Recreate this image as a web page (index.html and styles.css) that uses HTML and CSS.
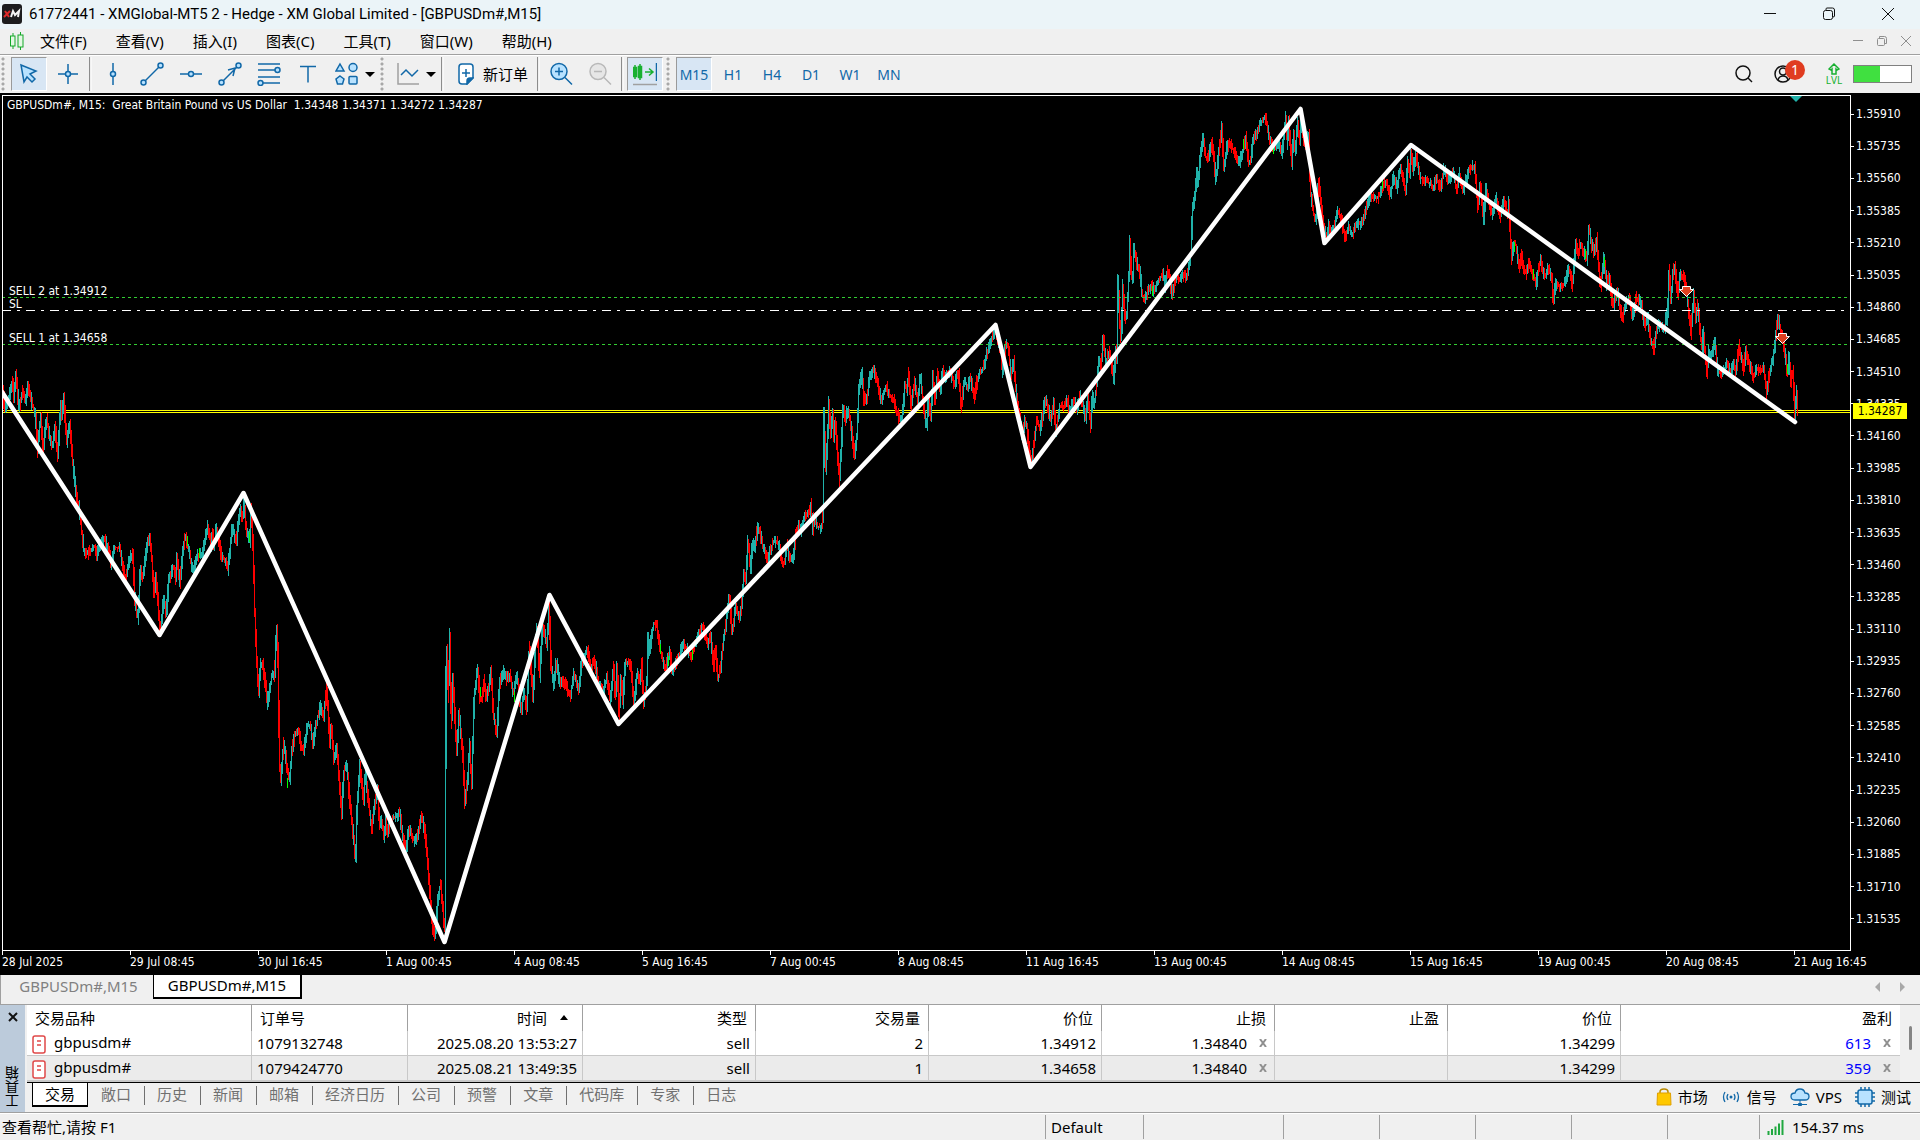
FILE: index.html
```html
<!DOCTYPE html>
<html lang="zh-CN">
<head>
<meta charset="utf-8">
<title>61772441 - XMGlobal-MT5 2 - Hedge - XM Global Limited - [GBPUSDm#,M15]</title>
<link rel="stylesheet" href="styles.css">
</head>
<body>
<header class="titlebar">
  <svg class="app-logo" viewBox="0 0 20 20" aria-hidden="true">
    <rect width="20" height="20" rx="3" fill="#1c1c1e"/>
    <path d="M3 7l4 6M8 7l-6 6" stroke="#e02a2a" stroke-width="2"/>
    <path d="M9 13l2-6 2 4 4-4-1 6" stroke="#f4f4f4" stroke-width="2" fill="none"/>
  </svg>
  <h1 class="title">61772441 - XMGlobal-MT5 2 - Hedge - XM Global Limited - [GBPUSDm#,M15]</h1>
  <div class="window-buttons">
    <button aria-label="最小化"><svg viewBox="0 0 14 14"><path d="M1 6.500h12"/></svg></button>
    <button aria-label="还原"><svg viewBox="0 0 14 14"><rect x="1.500" y="3.500" width="9" height="9" rx="2"/><path d="M4 3V2q0-1 1-1h5.500q2 0 2 2v6q0 1-1.500 1"/></svg></button>
    <button aria-label="关闭"><svg viewBox="0 0 14 14"><path d="M1 1l12 12M13 1L1 13"/></svg></button>
  </div>
</header>

<nav class="menubar">
  <svg class="menu-icon" viewBox="0 0 16 20" aria-hidden="true"><path d="M4 2v3M4 15v3M11.500 1v3M11.500 16v3" /><rect x="1.500" y="5" width="4.500" height="10"/><rect x="9" y="4" width="5" height="12"/></svg>
  <button>文件(F)</button><button>查看(V)</button><button>插入(I)</button><button>图表(C)</button><button>工具(T)</button><button>窗口(W)</button><button>帮助(H)</button>
  <div class="child-buttons">
    <button aria-label="最小化图表"><svg viewBox="0 0 12 12"><path d="M1 5.500h10"/></svg></button>
    <button aria-label="还原图表"><svg viewBox="0 0 12 12"><rect x="1.500" y="3.500" width="7" height="7" rx="1"/><path d="M3.500 3V1.500h5q2 0 2 2v5H9"/></svg></button>
    <button aria-label="关闭图表"><svg viewBox="0 0 12 12"><path d="M1 1l10 10M11 1L1 11"/></svg></button>
  </div>
</nav>

<div class="toolbar">
  <span class="grip"></span>
  <button class="tool selected" aria-label="光标"><svg viewBox="0 0 24 24"><path class="fill" d="M4 3l15 6-6 3 5 5-3 3-5-5-3 5z"/></svg></button>
  <button class="tool" aria-label="十字线"><svg viewBox="0 0 24 24"><path d="M12 2v20M2 12h20"/><circle class="fill" cx="12" cy="12" r="2.500"/></svg></button>
  <span class="sep"></span>
  <button class="tool" aria-label="垂直线"><svg viewBox="0 0 24 24"><path d="M12 1v22"/><circle class="fill" cx="12" cy="12" r="2.500"/></svg></button>
  <button class="tool" aria-label="趋势线"><svg viewBox="0 0 24 24"><path d="M4 20L20 4"/><circle class="fill" cx="3.500" cy="20.500" r="2.500"/><circle class="fill" cx="20.500" cy="3.500" r="2.500"/></svg></button>
  <button class="tool" aria-label="水平线"><svg viewBox="0 0 24 24"><path d="M1 12h22"/><circle class="fill" cx="12" cy="12" r="2.500"/></svg></button>
  <button class="tool" aria-label="箭头线"><svg viewBox="0 0 24 24"><path d="M4 20L20 4M10 8l7-2-2 8"/><circle class="fill" cx="3.500" cy="20.500" r="2.500"/><circle class="fill" cx="20.500" cy="3.500" r="2.500"/></svg></button>
  <button class="tool" aria-label="斐波那契"><svg viewBox="0 0 24 24"><path d="M1 2h22M1 8h18M1 15h22M5 21h18"/><circle class="fill" cx="20.500" cy="8" r="2.500"/><circle class="fill" cx="3.500" cy="21" r="2.500"/></svg></button>
  <button class="tool" aria-label="文本"><svg viewBox="0 0 24 24"><path d="M4 4.500h16M12 4.500v16"/></svg></button>
  <button class="tool drop" aria-label="图形"><svg viewBox="0 0 24 24"><path class="fill" d="M5 2l4 7H1zM5 14l4 3-1.500 5h-5L1 17z"/><circle class="fill" cx="18" cy="5.500" r="4"/><rect class="fill" x="14" y="14.500" width="8" height="7.500" rx="1"/></svg><i class="caret"></i></button>
  <span class="grip"></span>
  <button class="tool drop" aria-label="图表类型"><svg viewBox="0 0 24 24"><path class="mute" d="M2 1v21h21"/><path d="M5 13l5-5 6 6 6-6"/></svg><i class="caret"></i></button>
  <span class="sep"></span>
  <button class="tool order"><svg viewBox="0 0 16 22"><path d="M1 4q0-3 3-3h8q3 0 3 3v11l-6 6H4q-3 0-3-3z" fill="#fff"/><path d="M9 21v-3q0-3 3-3h3z" class="solid"/><path d="M8 6v8M4 10h8"/></svg>新订单</button>
  <span class="sep"></span>
  <button class="tool" aria-label="放大"><svg viewBox="0 0 24 24"><circle class="fill" cx="10" cy="9.500" r="8"/><path d="M10 5.500v8M6 9.500h8M16 15.500l7 7"/></svg></button>
  <button class="tool off" aria-label="缩小"><svg viewBox="0 0 24 24"><circle class="fill" cx="10" cy="9.500" r="8"/><path d="M6 9.500h8M16 15.500l7 7"/></svg></button>
  <span class="sep"></span>
  <button class="tool selected" aria-label="自动滚动"><svg viewBox="0 0 24 24"><path class="green" d="M2 3v14M7 2v16M.5 5.500h3v9h-3zM5.500 4.500h3v11h-3zM12 10h8M16 6.500l4 3.500-4 3.500"/><path d="M23.500 1v18"/><path class="mute" d="M0 22.500h24"/></svg></button>
  <span class="grip"></span>
  <button class="tool period selected">M15</button><button class="tool period">H1</button><button class="tool period">H4</button><button class="tool period">D1</button><button class="tool period">W1</button><button class="tool period">MN</button>
  <div class="tool-right">
    <button class="plain" aria-label="搜索"><svg width="20" height="20" viewBox="0 0 20 20"><circle cx="9" cy="9" r="7"/><path d="M14 14l4 4"/></svg></button>
    <button class="plain account" aria-label="账户"><svg width="32" height="20" viewBox="0 0 32 20"><circle cx="10" cy="10" r="8"/><circle cx="10" cy="7.500" r="3.500"/><path d="M5 16q1-4 5-4t5 4"/></svg><span class="badge">1</span></button>
    <div class="level">
      <button class="plain lvl"><svg width="12" height="12" viewBox="0 0 12 12"><path d="M6 1l5 5-2 1-1-1v5H4V6L3 7 1 6z"/></svg>LVL</button>
      <div class="battery"><span></span></div>
    </div>
  </div>
</div>

<main class="chart">
  <div class="plot">
    <svg class="plot-svg" id="plot" viewBox="3 96 1847 854" preserveAspectRatio="none" aria-label="GBPUSD M15">
      <path d="M2 410.500H1850M2 412.500H1850" stroke="#ff0" />
      <g id="bars" shape-rendering="crispEdges"></g>
      <path d="M2 297.500H1850M2 344.500H1850" stroke="#32cd32" stroke-dasharray="3 3"/>
      <path d="M2 310.500H1850" stroke="#fff" stroke-dasharray="9 6 3 6"/>
      <polyline points="2,392 159.500,635 243.500,493 444.500,942 549.500,595 618.500,724 995.500,325 1030.500,467 1300.500,109 1324.500,243 1411,145 1795,422" fill="none" stroke="#fff" stroke-width="4.500" stroke-linejoin="round" stroke-linecap="round"/>
      <g fill="#e04020" stroke="#fff">
        <path d="M1682.500 286.500h8v3h3l-7 7-7-7h3z"/>
        <path d="M1778.500 333.500h8v3h3l-7 7-7-7h3z"/>
      </g>
      <path d="M1790 96h12l-6 6z" fill="#20b2aa"/>
    </svg>
    <span class="note head">GBPUSDm#, M15:&nbsp; Great Britain Pound vs US Dollar&nbsp; 1.34348 1.34371 1.34272 1.34287</span>
    <span class="note sell2">SELL 2 at 1.34912</span>
    <span class="note sl">SL</span>
    <span class="note sell1">SELL 1 at 1.34658</span>
  </div>
  <div class="prices">
    <span>1.35910</span><span>1.35735</span><span>1.35560</span><span>1.35385</span><span>1.35210</span><span>1.35035</span><span>1.34860</span><span>1.34685</span><span>1.34510</span><span>1.34335</span><span>1.34160</span><span>1.33985</span><span>1.33810</span><span>1.33635</span><span>1.33460</span><span>1.33285</span><span>1.33110</span><span>1.32935</span><span>1.32760</span><span>1.32585</span><span>1.32410</span><span>1.32235</span><span>1.32060</span><span>1.31885</span><span>1.31710</span><span>1.31535</span>
    <b class="price-now">1.34287</b>
  </div>
  <div class="times">
    <span>28 Jul 2025</span><span>29 Jul 08:45</span><span>30 Jul 16:45</span><span>1 Aug 00:45</span><span>4 Aug 08:45</span><span>5 Aug 16:45</span><span>7 Aug 00:45</span><span>8 Aug 08:45</span><span>11 Aug 16:45</span><span>13 Aug 00:45</span><span>14 Aug 08:45</span><span>15 Aug 16:45</span><span>19 Aug 00:45</span><span>20 Aug 08:45</span><span>21 Aug 16:45</span>
  </div>
</main>

<div class="chart-tabs">
  <button>GBPUSDm#,M15</button><button class="active">GBPUSDm#,M15</button>
  <div class="tab-arrows"><button aria-label="向左"><svg viewBox="0 0 5 10"><path d="M5 0v10L0 5z"/></svg></button><button aria-label="向右"><svg viewBox="0 0 5 10"><path d="M0 0v10l5-5z"/></svg></button></div>
</div>

<section class="toolbox">
  <aside class="toolbox-side"><button aria-label="关闭"><svg viewBox="0 0 10 10"><path d="M1 1l8 8M9 1L1 9"/></svg></button><span>工具箱</span></aside>
  <div class="toolbox-main">
    <div class="table-wrap">
      <table>
        <colgroup><col class="c-symbol"><col class="c-order"><col class="c-time"><col class="c-num"><col class="c-num"><col class="c-num"><col class="c-num"><col class="c-num"><col class="c-num"><col></colgroup>
        <thead><tr><th class="left">交易品种</th><th class="left">订单号</th><th class="sorted">时间<i></i></th><th>类型</th><th>交易量</th><th>价位</th><th>止损</th><th>止盈</th><th>价位</th><th>盈利</th></tr></thead>
        <tbody>
          <tr><td class="sym"><svg viewBox="0 0 14 19"><rect x="1" y="1" width="12" height="17" rx="2"/><path d="M5 6h4M5 10h4"/></svg>gbpusdm#</td><td class="left">1079132748</td><td>2025.08.20 13:53:27</td><td>sell</td><td>2</td><td>1.34912</td><td>1.34840<button aria-label="删除止损"><svg viewBox="0 0 8 8"><path d="M1 0l6 8M7 0L1 8"/></svg></button></td><td></td><td>1.34299</td><td class="profit">613<button aria-label="平仓"><svg viewBox="0 0 8 8"><path d="M1 0l6 8M7 0L1 8"/></svg></button></td></tr>
          <tr><td class="sym"><svg viewBox="0 0 14 19"><rect x="1" y="1" width="12" height="17" rx="2"/><path d="M5 6h4M5 10h4"/></svg>gbpusdm#</td><td class="left">1079424770</td><td>2025.08.21 13:49:35</td><td>sell</td><td>1</td><td>1.34658</td><td>1.34840<button aria-label="删除止损"><svg viewBox="0 0 8 8"><path d="M1 0l6 8M7 0L1 8"/></svg></button></td><td></td><td>1.34299</td><td class="profit">359<button aria-label="平仓"><svg viewBox="0 0 8 8"><path d="M1 0l6 8M7 0L1 8"/></svg></button></td></tr>
        </tbody>
      </table>
      <div class="scroll"><span></span></div>
    </div>
    <div class="box-tabs">
      <button class="active">交易</button><button>敞口</button><button>历史</button><button>新闻</button><button>邮箱</button><button>经济日历</button><button>公司</button><button>预警</button><button>文章</button><button>代码库</button><button>专家</button><button>日志</button>
      <div class="services">
        <a href="#market"><svg width="16" height="18" viewBox="0 0 16 18"><path d="M4 7V4q0-3 4-3t4 3v3" fill="none" stroke="#b88a00" stroke-width="1.500"/><path d="M1.500 5h13L15 17H1z" fill="#ffc800" stroke="#e0a000"/></svg>市场</a>
        <a href="#signals"><svg width="20" height="14" viewBox="0 0 20 14"><circle cx="10" cy="7" r="1.500" fill="#1168a8"/><path d="M7 4q-2 3 0 6M13 4q2 3 0 6M4 2q-3 5 0 10M16 2q3 5 0 10" fill="none" stroke="#1168a8" stroke-width="1.300"/></svg>信号</a>
        <a href="#vps"><svg width="20" height="18" viewBox="0 0 20 18"><path d="M5 12q-4 0-4-3.500T5 5q1-4 5-4t5 4q4 0 4 3.500T15 12z" fill="#b8e2ff" stroke="#1168a8" stroke-width="1.300"/><path d="M10 12v4M3 16.500h14M8.500 15.500h3v2h-3z" fill="#1168a8" stroke="#1168a8"/></svg>VPS</a>
        <a href="#tester"><svg width="20" height="20" viewBox="0 0 20 20"><path d="M6 0v20M10 0v20M14 0v20M0 6h20M0 10h20M0 14h20" stroke="#1168a8" stroke-width="1.500"/><rect x="3" y="3" width="14" height="14" rx="2" fill="#b8e2ff" stroke="#1168a8" stroke-width="1.500"/></svg>测试</a>
      </div>
    </div>
  </div>
</section>

<footer class="status">
  <span class="help">查看帮忙,请按 F1</span>
  <span class="w1">Default</span><span class="w2"></span><span class="w3"></span><span class="w3"></span><span class="w3"></span><span class="w3"></span><span class="w4"></span>
  <span class="ping"><svg width="18" height="15" viewBox="0 0 18 15"><path d="M1.500 15v-4M5 15V9M8.500 15V6.500M12 15V3.500M15.500 15V0" stroke="#20a840" stroke-width="2"/></svg>154.37 ms</span>
</footer>
<script src="chart.js"></script>
</body>
</html>
```
FILE: styles.css
```css
* { box-sizing: border-box; }
html, body { height: 100%; }
body {
  margin: 0;
  display: flex;
  flex-direction: column;
  min-width: 1280px;
  overflow: hidden;
  background: #f0f0f0;
  color: #000;
  font: 15px/20px "Noto Sans", "Noto Sans CJK SC", sans-serif;
}
button { border: 0; padding: 0; margin: 0; background: none; color: inherit; font: inherit; }
svg { display: block; flex: none; }

.titlebar { height: 29px; flex: none; display: flex; align-items: center; padding: 0 0 2px 2px; background: #ebf4f8; }
.app-logo { width: 20px; height: 20px; }
.title { margin: 0 0 0 7px; font-family: Roboto, sans-serif; font-size: 15px; font-weight: 400; }
.window-buttons { margin-left: auto; display: flex; gap: 45px; padding-right: 25px; }
.window-buttons svg { width: 14px; height: 14px; fill: none; stroke: #111; stroke-width: 1; }

.menubar { height: 26px; flex: none; display: flex; align-items: center; gap: 1px; padding: 0 0 1px 9px; border-bottom: 1px solid #a0a0a0; }
.menu-icon { width: 16px; height: 20px; fill: #e4f8e4; stroke: #14a828; stroke-width: 1; }
.menubar > button { padding: 0 14px; }
.child-buttons { margin-left: auto; display: flex; gap: 12px; padding-right: 8px; }
.child-buttons svg { width: 12px; height: 12px; fill: none; stroke: #8f8f8f; stroke-width: 1; }

.toolbar { height: 38px; flex: none; display: flex; align-items: center; gap: 3px; padding: 0 8px 1px 1px; border-top: 1px solid #fff; }
.grip { width: 7px; height: 34px; background: radial-gradient(circle at 2px 2px, #a8a8a8 1px, transparent 2px) 0 0 / 7px 5px; }
.sep { width: 3px; height: 34px; border-right: 1px solid #f8f8f8; border-left: 1px solid #8c8c8c; }
.tool { width: 36px; height: 34px; flex: none; display: flex; align-items: center; justify-content: center; border: 1px solid transparent; }
.tool svg { width: 24px; height: 24px; fill: none; stroke: #1168a8; stroke-width: 1.5; }
.tool .fill { fill: #b8e2ff; }
.tool .solid { fill: #1168a8; }
.tool .mute { stroke: #a0a0a0; }
.tool .green { stroke: #18b030; }
.tool.off svg { stroke: #b8b8b8; }
.tool.off .fill { fill: #e6e6e6; }
.tool.selected { background: #d8e6f4; border-color: #9a9a9a #fff #fff #9a9a9a; }
.tool.drop { width: 48px; justify-content: flex-start; padding-left: 5px; gap: 6px; }
.caret { width: 0; height: 0; flex: none; border: 5px solid transparent; border-top-color: #000; border-bottom: 0; }
.tool.order { width: 87px; justify-content: flex-start; padding-left: 10px; gap: 9px; }
.tool.order svg { width: 16px; height: 22px; }
.tool.period { color: #1168a8; font-size: 14px; padding-top: 2px; }
.tool-right { margin-left: auto; display: flex; align-items: center; gap: 19px; }
.plain svg { fill: none; stroke: #111; stroke-width: 1.5; }
.account { position: relative; }
.badge { position: absolute; right: 0; top: -4px; width: 20px; height: 20px; border-radius: 50%; background: #e03c20; color: #fff; font-size: 14px; }
.level { display: flex; align-items: center; gap: 9px; }
.lvl { width: 20px; display: flex; flex-direction: column; align-items: center; color: #18b030; font: 10px/10px "Noto Sans", sans-serif; }
.lvl svg { stroke: #18b030; }
.battery { width: 59px; height: 18px; border: 1px solid #808080; background: #fff; display: flex; }
.battery span { width: 46%; background: #40e040; }

.chart {
  flex: 1;
  min-height: 0;
  display: grid;
  grid-template: minmax(0, 1fr) 24px / minmax(0, 1fr) 69px;
  padding: 2px 0 0 2px;
  background: #000;
  color: #fff;
  font: 12px/14px "DejaVu Sans Condensed", "DejaVu Sans", sans-serif;
}
.plot { position: relative; border: 1px solid #fff; }
.plot-svg { width: 100%; height: 100%; }
.note { position: absolute; left: 6px; white-space: nowrap; }
.head { left: 4px; top: 2px; }
.sell2 { top: 22%; }
.sl { top: 23.5%; }
.sell1 { top: 27.5%; }
.prices { position: relative; display: flex; flex-direction: column; padding: 3px 0 16px; }
.prices span { flex: 1; display: flex; align-items: center; gap: 2px; }
.prices span::before { content: ""; width: 3px; height: 1px; background: #fff; }
.price-now { position: absolute; left: 2px; top: 36%; width: 54px; height: 16px; background: #ff0; color: #000; font-weight: 400; line-height: 17px; text-align: center; }
.times { display: flex; grid-column: 1 / -1; padding-right: 69px; }
.times span { flex: 0 0 6.923%; white-space: nowrap; padding-top: 4px; background: linear-gradient(#fff, #fff) 0 0 / 1px 4px no-repeat; }

.chart-tabs { height: 29px; flex: none; display: flex; align-items: flex-start; padding-left: 3px; border-left: 1px solid #a0a0a0; color: #808080; }
.chart-tabs > button { width: 149px; height: 23px; padding-bottom: 2px; text-align: center; }
.chart-tabs .active { height: 24px; background: #fff; color: #000; border: solid #000; border-width: 0 2px 2px 1px; }
.tab-arrows { margin-left: auto; display: flex; gap: 20px; padding: 7px 15px 0 0; }
.tab-arrows svg { width: 5px; height: 10px; fill: #a8a8a8; }

.toolbox { height: 109px; flex: none; display: flex; border-top: 1px solid #a0a0a0; border-bottom: 1px solid #a0a0a0; }
.toolbox-side { width: 25px; display: flex; flex-direction: column; align-items: center; justify-content: space-between; padding: 7px 0 4px; background: #bccbdb; }
.toolbox-side svg { width: 10px; height: 10px; stroke: #111; stroke-width: 2; }
.toolbox-side span { writing-mode: vertical-rl; transform: rotate(180deg); font-size: 14px; line-height: 18px; }
.toolbox-main { flex: 1; min-width: 0; display: flex; flex-direction: column; padding-left: 2px; }
.table-wrap { display: flex; border-bottom: 1px solid #000; }
table { flex: 1; table-layout: fixed; width: 100%; border-collapse: separate; border-spacing: 0; background: #fff; border-bottom: 2px solid #c8c8c8; }
.c-symbol { width: 225px; }
.c-order { width: 156px; }
.c-time { width: 175px; }
.c-num { width: 173px; }
th, td { padding: 0 5px; text-align: right; white-space: nowrap; border-right: 1px solid #c8c8c8; }
th { height: 26px; padding: 0 8px; font-weight: 400; border-right-color: #a0a0a0; }
td { height: 24px; }
tbody tr:first-child td { height: 25px; border-bottom: 1px solid #c8c8c8; }
tbody tr:last-child { background: #ebebeb; }
th:last-child, td:last-child { border-right: 0; }
.left { text-align: left; }
.sorted { padding-right: 14px; }
.sorted i { display: inline-block; margin-left: 13px; border: 4px solid transparent; border-bottom: 5px solid #000; border-top: 0; vertical-align: 4px; }
.sym { text-align: left; }
.sym svg { display: inline-block; width: 14px; height: 19px; margin-right: 8px; vertical-align: middle; fill: #fff; stroke: #e04848; stroke-width: 1.5; }
td button { padding: 0 2px 0 12px; }
td button svg { width: 8px; height: 8px; stroke: #909090; stroke-width: 2; display: inline-block; vertical-align: 2px; }
td.profit { color: #00f; padding-right: 7px; }
.scroll { width: 20px; flex: none; display: flex; justify-content: center; padding-top: 21px; }
.scroll span { width: 3px; height: 24px; border-radius: 2px; background: #858585; }

.box-tabs { flex: 1; display: flex; align-items: flex-start; padding-left: 5px; color: #707070; }
.box-tabs > button { position: relative; height: 24px; padding: 0 13px 2px; }
.box-tabs > button + button + button::before { content: ""; position: absolute; left: 0; top: 3px; height: 19px; border-left: 1px solid #707070; }
.box-tabs > .active { background: #fff; color: #000; border: solid #000; border-width: 0 1px 2px; padding: 0 12px; }
.services { margin-left: auto; display: flex; align-items: center; gap: 13px; padding: 4px 9px 0 0; }
.services a { display: flex; align-items: center; gap: 6px; color: #000; text-decoration: none; }

.status { height: 27px; flex: none; display: flex; border-top: 1px solid #fff; padding: 1px 0; }
.status span { border-left: 1px solid #a0a0a0; padding: 2px 0 0 5px; }
.status .help { flex: 1; border: 0; padding-left: 2px; }
.status .w1 { width: 98px; }
.status .w2 { width: 140px; }
.status .w3 { width: 96px; }
.status .w4 { width: 92px; }
.status .ping { width: 161px; display: flex; gap: 7px; padding-left: 7px; }
.ping svg { margin-top: 3px; }
```
FILE: chart.js
```js
// Price swings: each section has an origin and a list of x,y pairs in thirds of a unit.
const sections = [
  [0, 270, "9,345 12,420 24,390 36,330 41,380 47,305 55,415 68,360 75,395 83,345 95,400 105,430 112,545 121,430 128,540 138,440 150,510 157,530 165,470 172,560 181,400 184,445 190,375 199,520 208,455 216,565 228,680 237,710 250,840 262,850 283,825 288,855 300,820 312,805 325,840 333,885 341,830 357,830 375,925 390,855 397,850 404,990 414,1045 420,890 426,930 438,835 449,800 455,870 461,980 466,905 480,1085 490,980 498,1030 505,930 520,885 527,930 530,860 539,940 546,850 555,795 566,840 578,905 590,855 605,850 622,765 632,825 637,785 641,830 648,770 662,850 676,875 683,900 695,770 708,815 720,710 726,750 731,690 738,780 748,815 753,710 759,850 763,1020"],
  [230, 600, "75,60 78,160 85,280 91,190 97,190 105,250 112,310 124,230 133,225 137,120 141,80 145,310 147,480 152,540 160,420 170,500 178,540 185,450 193,405 205,385 213,440 221,450 230,380 240,370 248,430 258,370 270,315 280,350 290,260 298,430 303,370 311,480 318,430 327,540 334,640 341,510 350,490 357,590 370,720 376,775 380,630 388,495 400,600 405,510 415,610 424,690 434,600 442,570 447,670 453,660 462,710 466,650 471,700 480,660 495,650 508,635 516,700 528,760 534,680 545,710 555,725 565,690 575,640 583,690 586,710 592,790 600,890 608,990 614,1010 622,900 631,850 638,930 644,1010 647,200 650,140 654,290 658,100 663,370 668,220 675,380 680,450 686,340 697,450 704,610 712,540 718,430 724,560 731,300 742,200 748,290 755,300 762,240 768,300 775,260 782,200 789,340 800,400 807,250 820,210 828,240 838,220 850,280 860,220 873,340 880,270 890,330 897,130 908,300 915,140 920,80 928,230 935,100 940,80 950,140 956,5 962,190 970,260 978,180 988,250 1000,240 1020,290 1030,220 1047,270 1052,190 1065,160 1072,150 1082,200 1092,180 1105,250 1120,270 1130,230 1140,300 1150,200 1155,290 1160,190 1166,350 1172,230 1178,310 1184,190 1200,190 1212,310 1220,220 1230,250 1234,180 1240,310 1250,240 1253,110 1258,150 1270,70 1280,75 1290,150 1305,205 1320,150 1324,215 1340,180 1360,130 1382,165 1400,110 1418,80 1432,130"],
  [640, 380, "205,785 211,770 220,860 226,800 233,900 241,860 250,780 258,720 267,650 276,760 287,670 297,720 305,660 311,570 316,600 323,480 331,570 336,490 344,500 352,440 360,460 368,500 377,520 384,540 388,500 392,520 398,480 415,490 425,540 432,550 441,490 447,530 458,535 468,450 475,430 482,450 490,420 500,395 507,400 512,370 517,450 522,400 530,440 545,440 549,390 551,90 556,270 561,190 566,60 571,170 577,100 581,170 585,120 592,230 598,300 604,180 608,75 616,120 622,85 630,120 643,230 651,150 655,30 660,0 665,-20 671,60 680,50 690,-20 700,-30 712,10 724,60 737,15 745,40 760,60 776,115 786,110 794,10 800,30 805,-20 812,80 823,0 832,60 840,-10 846,40 855,120 860,140 864,50 872,110 877,-20 884,60 892,-20 900,30 906,-30 915,-10 928,-30 942,10 955,-20 963,80 972,0 982,20 990,-10 1003,50 1012,-10 1030,-40 1045,-100 1060,-140 1066,-150 1075,-100"],
  [1000, 90, "0,760 7,850 15,770 23,760 32,850 40,810 47,900 58,980 66,1050 74,985 80,1010 88,1100 94,1110 100,1060 110,990 120,1020 130,950 138,930 151,990 160,935 167,1030 172,990 178,945 190,950 202,930 208,970 220,925 230,960 238,915 247,940 256,985 262,920 272,1010 276,910 282,940 290,880 297,800 302,830 309,740 316,820 327,780 335,830 341,865 347,780 350,820 353,560 358,700 363,750 367,580 374,690 380,670 386,550 389,450 392,540 397,570 401,470 410,520 418,540 425,610 432,630 440,610 455,585 462,605 470,575 488,550 494,590 503,540 515,610 527,560 540,560 552,550 558,570 566,520 573,480 576,350 582,330 590,240 593,280 600,200 608,145 616,200 624,200 635,150 647,270 656,180 664,110 671,230 680,170 690,160 703,185 716,220 728,180 737,135 744,215 752,210 756,160 775,110 795,75 806,140 820,180 835,150 845,190 856,80 861,160 865,80 870,170 875,220 880,120 886,190 891,90 898,150 903,80 912,160 925,130 930,300 940,370 948,390 954,265 960,320 968,400 978,440 986,400 992,430 1003,400 1012,360 1024,390 1034,440 1045,410 1056,430 1070,400 1084,400 1095,360 1108,315 1130,325 1143,300 1155,270 1170,315 1180,260 1190,290 1200,230 1213,290 1217,300 1222,210 1228,250 1232,185 1240,240 1248,195 1258,260 1275,270 1290,280 1300,295 1308,260 1322,300 1330,235 1345,270 1357,240 1370,300 1377,245 1388,300 1400,260 1412,225 1424,230 1432,345"],
  [1440, 90, "2,300 5,260 12,240 30,280 38,235 48,300 57,250 66,300 80,270 92,225 104,230 112,350 120,285 131,390 137,290 146,340 155,370 168,320 178,380 190,330 203,370 205,335 210,430 214,510 219,460 228,465 237,530 243,495 250,540 258,550 266,515 276,550 288,580 292,550 300,510 315,560 324,530 335,570 339,640 345,580 360,590 372,580 386,530 396,590 402,510 407,460 414,490 420,460 430,480 440,510 446,410 455,470 463,490 469,440 475,530 481,590 491,500 500,590 506,555 518,650 531,600 545,690 555,640 568,620 577,680 588,620 597,630 605,650 614,710 622,680 630,740 641,780 650,710 662,700 673,720 678,670 681,700 686,540 692,630 699,540 704,530 712,620 719,550 732,560 742,630 752,730 760,610 767,690 773,640 780,740 787,780 788,715 800,850 806,780 813,800 824,750 832,840 840,850 850,840 860,815 870,845 880,815 887,845 896,765 910,840 917,780 930,830 940,860 948,830 960,845 970,830 980,910 988,840 997,810 1004,760 1013,680 1020,720 1028,750 1040,840 1043,850 1046,790 1051,880 1058,840 1064,980 1068,900 1072,975"]
];

const points = sections.flatMap(([ox, oy, list]) =>
  list.split(" ").map(pair => {
    const [x, y] = pair.split(",").map(Number);
    return [ox + x / 3, oy + y / 3];
  })
);

let seed = 7;
const random = () => (seed = (seed * 16807) % 2147483647) / 2147483647;

const priceAt = x => {
  let i = 1;
  while (i < points.length - 1 && points[i][0] < x) i++;
  const [x0, y0] = points[i - 1];
  const [x1, y1] = points[i];
  const t = Math.min(1, Math.max(0, (x - x0) / (x1 - x0 || 1)));
  return y0 + (y1 - y0) * t;
};

// One bar per unit of x, rising bars teal and falling bars red.
const up = [];
const down = [];
for (let x = 3; x < 1798; x++) {
  const open = priceAt(x - 0.7);
  const close = priceAt(x + 0.7);
  const turns = points.filter(p => p[0] >= x - 0.5 && p[0] < x + 0.5).map(p => p[1]);
  const high = Math.round(Math.min(open, close, ...turns) - random() * 6);
  const low = Math.round(Math.max(open, close, ...turns) + 1 + random() * 6);
  const steep = Math.abs(close - open) > 14;
  const rising = close < open;
  const flip = !steep && random() < 0.3;
  (rising !== flip ? up : down).push(`M${x + 0.5} ${high}V${low}`);
}

const marked = [[187, 541], [199, 553], [249, 537], [287, 783], [480, 692], [514, 697], [660, 649], [668, 661], [692, 655], [1152, 291], [1243, 144], [1273, 149], [1382, 184], [1514, 247], [1533, 274], [1585, 254], [1604, 262], [1787, 369]]
  .map(([x, y]) => `M${x + 0.5} ${y - 5}V${y + 5}`);

const group = document.getElementById("bars");
for (const [colour, parts] of [["#20b2aa", up], ["#f00", down], ["#0f0", marked]]) {
  const path = document.createElementNS("http://www.w3.org/2000/svg", "path");
  path.setAttribute("d", parts.join(""));
  path.setAttribute("stroke", colour);
  group.append(path);
}
```
